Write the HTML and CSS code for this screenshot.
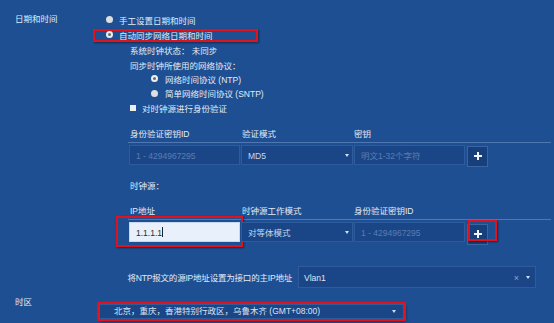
FILE: index.html
```html
<!DOCTYPE html>
<html lang="zh-CN">
  <head>
    <meta charset="UTF-8" />
    <title>日期和时间</title>
    <link rel="stylesheet" href="styles.css">
  </head>
  <body>
    <div class="page">
      <div class="field">
        <div class="field-label">日期和时间</div>
        <div class="field-body">
          <div class="opt"><span class="radio"></span>手工设置日期和时间</div>
          <div class="opt marked"><span class="radio on"></span>自动同步网络日期和时间</div>

          <div class="sync">
            <div class="line">系统时钟状态： 未同步</div>
            <div class="line">同步时钟所使用的网络协议：</div>
            <div class="line proto"><span class="radio on"></span>网络时间协议 (NTP)</div>
            <div class="line proto"><span class="radio"></span>简单网络时间协议 (SNTP)</div>
            <div class="line"><span class="check"></span>对时钟源进行身份验证</div>
          </div>

          <div class="grid">
            <div class="grid-head">
              <span>身份验证密钥ID</span>
              <span>验证模式</span>
              <span>密钥</span>
            </div>
            <div class="grid-row">
              <div class="box placeholder">1 - 4294967295</div>
              <div class="box select">MD5<i class="caret"></i></div>
              <div class="box placeholder">明文1-32个字符</div>
              <div class="add"><span class="plus"></span></div>
            </div>
          </div>

          <div class="section-title">时钟源：</div>

          <div class="grid grid-source">
            <div class="grid-head">
              <span>IP地址</span>
              <span>时钟源工作模式</span>
              <span>身份验证密钥ID</span>
            </div>
            <div class="grid-row">
              <div class="box filled marked-ip">1.1.1.1<i class="cursor"></i></div>
              <div class="box select">对等体模式<i class="caret"></i></div>
              <div class="box placeholder">1 - 4294967295</div>
              <div class="add marked-add"><span class="plus"></span></div>
            </div>
          </div>

          <div class="source-ip">
            <div class="source-label">将NTP报文的源IP地址设置为接口的主IP地址</div>
            <div class="box select wide">Vlan1<i class="clear">×</i><i class="caret"></i></div>
          </div>
        </div>
      </div>

      <div class="field zone">
        <div class="field-label zone-label">时区</div>
        <div class="field-body">
          <div class="box select zone-select">北京，重庆，香港特别行政区，乌鲁木齐 (GMT+08:00)<i class="caret"></i></div>
        </div>
      </div>
    </div>
  </body>
</html>
```

FILE: styles.css
```css
html,
body {
  margin: 0;
  background: #1d4f92;
}
body {
  font-family: 'Liberation Sans', 'Noto Sans CJK SC', sans-serif;
  font-size: 8.5px;
  color: #e4ebf6;
  width: 554px;
  height: 323px;
  overflow: hidden;
}
.page {
  padding-top: 12px;
}
.field {
  display: flex;
}
.field-label {
  width: 83px;
  padding-left: 15px;
  line-height: 15px;
}
.field-body {
  flex: 1;
}
.opt {
  display: flex;
  align-items: center;
  height: 15px;
  padding-left: 8px;
}
.radio {
  width: 7px;
  height: 7px;
  border-radius: 50%;
  background: #dedede;
  margin-right: 6px;
  box-sizing: border-box;
}
.radio.on {
  border: 2px solid #eeeeee;
  background: #6b6b6b;
}
.marked {
  position: relative;
}
.marked::after {
  content: '';
  position: absolute;
  left: -5px;
  top: 2px;
  width: 165px;
  height: 13px;
  border: 2px solid #e0121c;
  box-sizing: border-box;
  box-shadow: 1px 1px 2px rgba(0, 0, 0, 0.45);
}
.sync {
  margin-top: 1px;
  padding-left: 32px;
}
.line {
  display: flex;
  align-items: center;
  height: 14.4px;
}
.proto {
  padding-left: 21px;
}
.proto .radio {
  margin-right: 7px;
}
.check {
  width: 6px;
  height: 6px;
  background: #eeeeee;
  margin-right: 6px;
}
.grid {
  margin-top: 12px;
  margin-left: 30px;
  width: 423px;
}
.grid-head {
  display: flex;
  height: 15px;
  line-height: 15px;
  border-bottom: 1px solid #4f78b2;
  padding-left: 2px;
}
.grid-head span {
  width: 112px;
}
.grid-row {
  display: flex;
  margin-top: 2px;
  padding-left: 1px;
}
.box {
  position: relative;
  width: 111px;
  height: 20px;
  line-height: 20px;
  margin-right: 1px;
  padding-left: 6px;
  box-sizing: border-box;
  background: #1a4688;
  border: 1px solid #2d5b9b;
  color: #c9d6ea;
  white-space: nowrap;
}
.box.select {
  width: 112px;
}
.placeholder {
  color: #5b7db0;
}
.caret {
  position: absolute;
  right: 3px;
  top: 8px;
  border-left: 2px solid transparent;
  border-right: 2px solid transparent;
  border-top: 3px solid #d5deec;
}
.add {
  width: 21px;
  height: 21px;
  margin-left: 1px;
  margin-top: 1px;
  box-sizing: border-box;
  background: #173f7b;
  border: 1px solid #3b65a2;
  display: flex;
  align-items: center;
  justify-content: center;
}
.plus {
  position: relative;
  width: 8px;
  height: 2px;
  background: #f2f5fa;
}
.plus::after {
  content: '';
  position: absolute;
  left: 3px;
  top: -3px;
  width: 2px;
  height: 8px;
  background: #f2f5fa;
}
.section-title {
  margin-top: 12px;
  padding-left: 32px;
  line-height: 15px;
}
.grid-source {
  margin-top: 10px;
}
.grid-source .add {
  margin-top: 2px;
}
.filled {
  background: #e8f0fc;
  border-color: #c9d8ee;
  color: #2a2a2a;
}
.cursor {
  display: inline-block;
  width: 1px;
  height: 10px;
  background: #222;
  vertical-align: -1px;
}
.marked-ip::after,
.marked-add::after {
  content: '';
  position: absolute;
  border: 2px solid #e0121c;
  box-shadow: 1px 1px 2px rgba(0, 0, 0, 0.45);
}
.marked-ip::after {
  left: -14px;
  top: -7px;
  right: -4px;
  bottom: -6px;
}
.marked-add {
  position: relative;
}
.marked-add::after {
  left: 0;
  top: -5px;
  width: 29px;
  height: 21px;
  box-sizing: border-box;
}
.source-ip {
  display: flex;
  align-items: center;
  margin-top: 21px;
}
.source-label {
  width: 194px;
  text-align: right;
  margin-right: 6px;
  letter-spacing: -0.2px;
}
.box.wide {
  width: 238px;
  height: 22px;
  line-height: 22px;
  padding-left: 5px;
  color: #dfe7f3;
}
.wide .caret {
  top: 9px;
  right: 5px;
}
.clear {
  position: absolute;
  right: 16px;
  font-style: normal;
  color: #8ea6c9;
  font-size: 9px;
}
.zone {
  margin-top: 16px;
}
.zone-label {
  margin-top: -9px;
}
.box.zone-select {
  width: 305px;
  height: 15px;
  line-height: 13px;
  margin-left: 1px;
  padding-left: 14px;
  color: #dbe4f1;
  outline: 2px solid #e0121c;
  box-shadow: 2px 2px 3px rgba(0, 0, 0, 0.45);
}
.zone-select .caret {
  top: 5px;
  right: 7px;
}
```
